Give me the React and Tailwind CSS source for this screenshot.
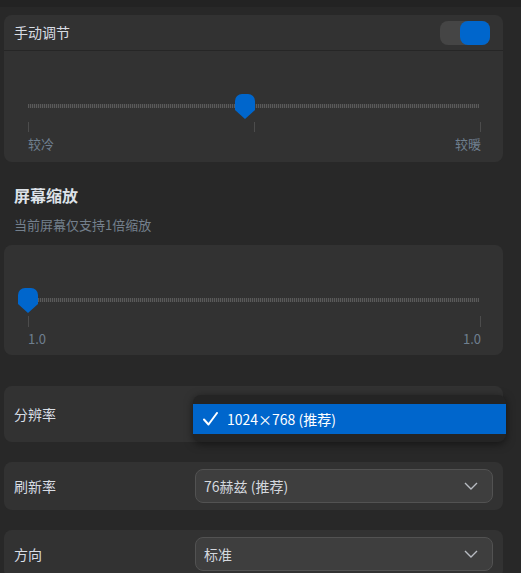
import React from "react";

const font = { fontFamily: '"Noto Sans CJK SC", "Noto Sans", sans-serif' };

const Thumb = () => (
    <svg width="20" height="25" viewBox="0 0 20 25">
        <path d="M0 7 A7 7 0 0 1 7 0 H13 A7 7 0 0 1 20 7 V16 L10 25 L0 16 Z" fill="#0066cc" />
    </svg>
);

const Chevron = () => (
    <svg width="14" height="8" viewBox="0 0 14 8" fill="none">
        <path d="M1 1 L7 7 L13 1" stroke="#b8bcc2" strokeWidth="1.4" />
    </svg>
);

const Track = () => (
    <div className="absolute left-0 right-0 top-[10px] h-[4px] bg-[repeating-linear-gradient(90deg,#5a5a5a_0_1px,#3a3a3a_1px_2px)]" />
);

const Select = ({ value }) => (
    <div className="w-[298px] h-[34px] rounded-lg bg-[#3e3e3e] border border-[#525252] flex items-center justify-between pl-[8px] pr-[14px] text-[14px] text-[#d4d8de]">
        <span>{value}</span>
        <Chevron />
    </div>
);

export default function App() {
    return (
        <div className="w-[521px] h-[573px] overflow-hidden bg-[#282828]" style={font}>
            <div className="h-[7px] bg-[#232323]" />
            <div className="pl-[4px] pr-[18px] pt-[8px]">
                {/* manual adjust */}
                <div className="rounded-lg bg-[#323232]">
                    <div className="h-[36px] flex items-center justify-between pl-[10px] pr-[13px] border-b border-[#262626]">
                        <span className="text-[14px] text-[#d8dde4]">手动调节</span>
                        <div className="w-[50px] h-[24px] rounded-lg bg-[#454545] flex justify-end">
                            <div className="w-[30px] h-[24px] rounded-lg bg-[#0066cc]" />
                        </div>
                    </div>
                    <div className="px-[24px] pt-[43px] pb-[8px]">
                        <div className="relative h-[25px]">
                            <Track />
                            <div className="absolute left-[207px] top-0">
                                <Thumb />
                            </div>
                        </div>
                        <div className="mt-[3px] w-[453px] h-[10px] flex justify-between">
                            <div className="w-px h-full bg-[#4c4c4c]" />
                            <div className="w-px h-full bg-[#4c4c4c]" />
                            <div className="w-px h-full bg-[#4c4c4c]" />
                        </div>
                        <div className="mt-[2px] flex justify-between text-[13px] leading-[20px] text-[#6f7f8f] w-[453px]">
                            <span>较冷</span>
                            <span>较暖</span>
                        </div>
                    </div>
                </div>

                {/* scaling */}
                <div className="pl-[10px] pt-[22px]">
                    <div className="text-[16px] leading-[22px] font-bold text-[#dde2e8]">屏幕缩放</div>
                    <div className="mt-[10px] text-[13px] leading-[18px] text-[#74808d]">当前屏幕仅支持1倍缩放</div>
                </div>
                <div className="mt-[11px] rounded-lg bg-[#323232] pl-[14px] pr-[24px] pt-[43px] pb-[6px]">
                    <div className="relative h-[25px]">
                        <div className="absolute left-[20px] right-0 top-[10px] h-[4px] bg-[repeating-linear-gradient(90deg,#5a5a5a_0_1px,#3a3a3a_1px_2px)]" />
                        <div className="absolute left-0 top-0">
                            <Thumb />
                        </div>
                    </div>
                    <div className="ml-[10px] mt-[3px] w-[453px] h-[11px] flex justify-between">
                        <div className="w-px h-full bg-[#4c4c4c]" />
                        <div className="w-px h-full bg-[#4c4c4c]" />
                    </div>
                    <div className="ml-[10px] mt-[2px] flex justify-between text-[13px] leading-[20px] text-[#6f7f8f] w-[453px]">
                        <span>1.0</span>
                        <span>1.0</span>
                    </div>
                </div>

                {/* resolution */}
                <div className="relative mt-[31px] h-[56px] rounded-lg bg-[#323232] flex items-center pl-[10px]">
                    <span className="text-[14px] text-[#d8dde4]">分辨率</span>
                    <div className="absolute left-[189px] top-[9px] w-[313px] rounded-lg bg-[#242424] pt-[9px] pb-[8px] shadow-[0_2px_8px_rgba(0,0,0,0.5)]">
                        <div className="h-[30px] bg-[#0066cc] flex items-center pl-[10px] gap-[9px] text-[14px] text-white">
                            <svg width="15" height="14" viewBox="0 0 15 14" fill="none">
                                <path d="M1 7.5 L5.5 12.5 L14 1" stroke="white" strokeWidth="2" strokeLinecap="round" strokeLinejoin="round" />
                            </svg>
                            <span>1024×768 (推荐)</span>
                        </div>
                    </div>
                </div>

                {/* refresh rate */}
                <div className="mt-[20px] h-[48px] rounded-lg bg-[#323232] flex items-center justify-between pl-[10px] pr-[10px]">
                    <span className="text-[14px] text-[#d8dde4]">刷新率</span>
                    <Select value="76赫兹 (推荐)" />
                </div>

                {/* orientation */}
                <div className="mt-[20px] h-[48px] rounded-lg bg-[#323232] flex items-center justify-between pl-[10px] pr-[10px]">
                    <span className="text-[14px] text-[#d8dde4]">方向</span>
                    <Select value="标准" />
                </div>
            </div>
        </div>
    );
}
